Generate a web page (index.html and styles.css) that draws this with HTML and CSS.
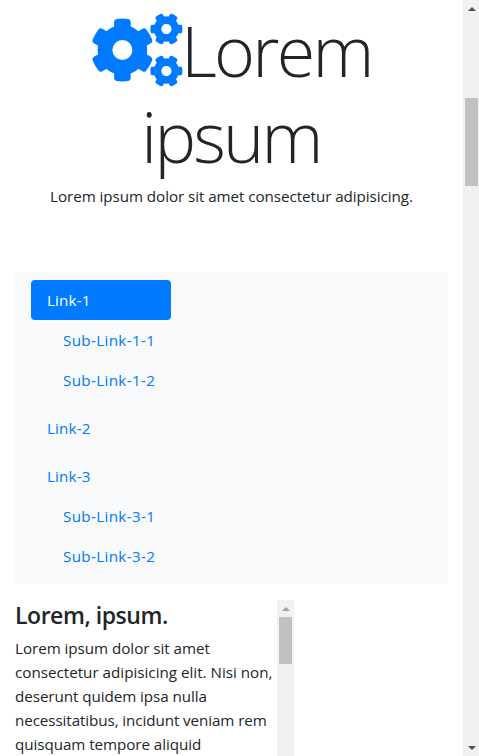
FILE: index.html
```
<!DOCTYPE html>
<html lang="en">
<head>
<meta charset="utf-8">
<title>Lorem ipsum</title>
<link rel="stylesheet" href="styles.css">
</head>
<body>
<div class="window">
  <main class="page">
    <header class="hero">
      <h1 class="display"><svg class="cogs" viewBox="0 0 90 72" aria-hidden="true">
        <defs>
          <g id="cog">
            <circle r="17.4" fill="none" stroke="currentColor" stroke-width="14.8"/>
            <g id="teeth">
              <path id="tooth" d="M-8.3-18V-28Q-8.3-30.6-5.8-31Q0-31.8 5.8-31Q8.3-30.6 8.3-28V-18Z"/>
              <use href="#tooth" transform="rotate(60)"/>
              <use href="#tooth" transform="rotate(120)"/>
              <use href="#tooth" transform="rotate(180)"/>
              <use href="#tooth" transform="rotate(240)"/>
              <use href="#tooth" transform="rotate(300)"/>
            </g>
          </g>
        </defs>
        <use href="#cog" transform="translate(30.4 36)"/>
        <use href="#cog" transform="translate(74.4 15) rotate(30) scale(.51)"/>
        <use href="#cog" transform="translate(74.4 57) rotate(30) scale(.51)"/>
      </svg><span class="word first">Lorem</span><br><span class="word second">ipsum</span></h1>
      <p class="lead">Lorem ipsum dolor sit amet consectetur adipisicing.</p>
    </header>
    <nav class="nav">
      <a class="link active">Link-1</a>
      <div class="sub"><a class="link">Sub-Link-1-1</a><a class="link">Sub-Link-1-2</a></div>
      <a class="link gap">Link-2</a>
      <a class="link gap">Link-3</a>
      <div class="sub"><a class="link">Sub-Link-3-1</a><a class="link">Sub-Link-3-2</a></div>
    </nav>
    <section class="spy">
      <article class="text">
        <h4>Lorem, ipsum.</h4>
        <p><span class="l1">Lorem ipsum dolor sit amet</span><br><span class="l2">consectetur adipisicing elit. Nisi non,</span><br><span class="l3">deserunt quidem ipsa nulla</span><br><span class="l4">necessitatibus, incidunt veniam rem</span><br><span class="l5">quisquam tempore aliquid</span></p>
      </article>
      <div class="bar inner"><i class="arrow up"></i><i class="thumb"></i></div>
    </section>
  </main>
  <div class="bar outer"><i class="arrow up"></i><i class="thumb"></i><i class="arrow down"></i></div>
</div>
</body>
</html>
```
FILE: styles.css
```
* { box-sizing: border-box; }
body { margin: 0; overflow: hidden; background: #fff; color: #212529; font: 15.2px/24px "Open Sans", "Noto Sans", sans-serif; letter-spacing: -.06px; }
.window { display: flex; height: 756px; overflow: hidden; }
.page { width: 463px; padding: 7px 15px 0; overflow: hidden; }
.hero { height: 265px; text-align: center; white-space: nowrap; }
.display { margin: 0; height: 177px; font-size: 70px; line-height: 86px; font-weight: 300; letter-spacing: -2.8px; }
.first { margin-left: -.5px; }
.second { margin-left: -1px; }
.cogs { width: 90px; height: 72px; overflow: visible; vertical-align: -9px; color: #007bff; fill: #007bff; }
.lead { margin: 0; }
.nav { width: 433px; height: 312px; padding: 8px 16px; background: #f8f9fa; display: flex; flex-direction: column; }
.link { display: block; height: 40px; padding: 8px 16px; color: #007bff; letter-spacing: .15px; }
.active { width: 140px; border-radius: 4px; background: #007bff; color: #fff; }
.sub { margin-left: 16px; }
.sub .link { letter-spacing: .35px; }
.gap { margin-top: 8px; }
.spy { display: flex; margin-top: 16px; height: 156px; overflow: hidden; }
.text { width: 262px; white-space: nowrap; }
.text h4 { margin: 0 0 7px; padding-top: 1px; height: 29px; font-size: 23px; line-height: 29px; font-weight: 600; letter-spacing: -.45px; }
.text p { margin: 0; }
.l1 { letter-spacing: -.04px; }
.l2 { letter-spacing: 0; }
.l4 { letter-spacing: -.09px; }
.bar { display: flex; flex-direction: column; align-items: center; flex: none; background: #f1f1f1; }
.thumb { width: 13px; background: #c1c1c1; }
.arrow { width: 0; height: 0; border: 4px solid transparent; }
.arrow.up { border-top: 0; border-bottom-color: #505050; }
.arrow.down { border-bottom: 0; border-top-color: #505050; margin-top: auto; margin-bottom: 6px; }
.inner { width: 17px; height: 200px; }
.inner .arrow.up { margin-top: 7px; border-bottom-color: #a3a3a3; }
.inner .thumb { height: 47px; margin-top: 6px; }
.outer { width: 16px; height: 756px; padding-left: 1px; }
.outer .arrow.up { margin-top: 7px; }
.outer .thumb { height: 88px; margin-top: 87px; }
```
